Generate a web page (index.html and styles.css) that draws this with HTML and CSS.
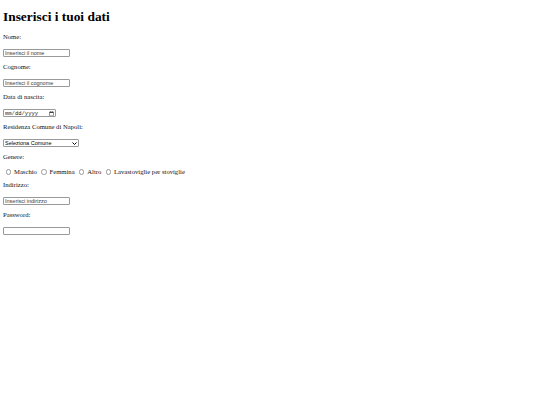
FILE: index.html
```html
<!DOCTYPE html>
<html lang="it">
<head>
    <meta charset="UTF-8">
    <meta name="viewport" content="width=device-width, initial-scale=1.0">
    <link rel="stylesheet" href="styles.css">
    <title>Registrazione</title>
</head>
<body>

<h1>Inserisci i tuoi dati</h1>

<form id="dati">
    <label for="nome">Nome:</label>
    <input type="text" id="nome" name="nome" placeholder="Inserisci il nome">

    <label for="cognome">Cognome:</label>
    <input type="text" id="cognome" name="cognome" placeholder="Inserisci il cognome">

    <label for="nascita">Data di nascita:</label>
    <input type="date" id="nascita" name="nascita">

    <label for="comune">Residenza Comune di Napoli:</label>
    <span class="scelta">
        <select id="comune" name="comune">
            <option value="">Seleziona Comune</option>
            <option value="napoli">Napoli</option>
            <option value="pozzuoli">Pozzuoli</option>
            <option value="torre-del-greco">Torre del Greco</option>
            <option value="castellammare">Castellammare di Stabia</option>
        </select>
        <svg class="freccia" width="5" height="3" viewBox="0 0 10 6"><path d="M1 1l4 4 4-4" fill="none" stroke="#000" stroke-width="2"/></svg>
    </span>

    <span class="titolo">Genere:</span>
    <div class="genere">
        <input type="radio" id="maschio" name="genere" value="maschio"><label for="maschio">Maschio</label>
        <input type="radio" id="femmina" name="genere" value="femmina"><label for="femmina">Femmina</label>
        <input type="radio" id="altro" name="genere" value="altro"><label for="altro">Altro</label>
        <input type="radio" id="lavastoviglie" name="genere" value="lavastoviglie"><label for="lavastoviglie">Lavastoviglie per stoviglie</label>
    </div>

    <label for="indirizzo">Indirizzo:</label>
    <input type="text" id="indirizzo" name="indirizzo" placeholder="Inserisci indirizzo">

    <label for="password">Password:</label>
    <input type="password" id="password" name="password">
</form>

</body>
</html>
```

FILE: styles.css
```css
body {
    margin: 0;
    padding: 3px;
    font-family: "Liberation Serif", "Times New Roman", serif;
    font-size: 6.65px;
    color: #111;
}

h1 {
    margin: 6px 0 9px;
    font-size: 13.4px;
    line-height: 15.4px;
    color: #000;
}

#dati {
    display: flex;
    flex-direction: column;
    align-items: flex-start;
}

#dati > label,
.titolo {
    line-height: 8px;
    margin-bottom: 8px;
}

#dati > input,
.scelta {
    margin-bottom: 6px;
}

.genere {
    margin-bottom: 5px;
}

.titolo {
    margin-bottom: 7px;
}

input[type="text"],
input[type="password"],
input[type="date"],
select {
    box-sizing: border-box;
    height: 8px;
    padding: 0 1px;
    font-family: "Liberation Sans", Arial, sans-serif;
    font-size: 5.5px;
    color: #000;
    background: #fff;
    border: 1px solid #999;
    border-radius: 1px;
}

input[type="text"],
input[type="password"] {
    width: 67px;
}

input::placeholder {
    color: #3a3a3a;
}

input[type="date"] {
    width: 53px;
    font-family: "Liberation Mono", monospace;
    color: #222;
}

input[type="date"]::-webkit-datetime-edit,
input[type="date"]::-webkit-datetime-edit-fields-wrapper,
input[type="date"]::-webkit-datetime-edit-month-field,
input[type="date"]::-webkit-datetime-edit-day-field,
input[type="date"]::-webkit-datetime-edit-year-field,
input[type="date"]::-webkit-datetime-edit-text {
    padding: 0;
    margin: 0;
}

input[type="date"]::-webkit-calendar-picker-indicator {
    width: 5px;
    height: 5px;
    padding: 0;
    margin: 0 0 0 1px;
}

.scelta {
    position: relative;
    display: inline-block;
    height: 8px;
}

select {
    appearance: none;
    display: block;
    width: 76px;
    margin: 0;
}

.freccia {
    position: absolute;
    top: 3px;
    right: 2px;
    pointer-events: none;
}

.genere {
    line-height: 8px;
}

.genere input[type="radio"] {
    appearance: none;
    box-sizing: border-box;
    width: 5.5px;
    height: 5.5px;
    margin: 0 3px 0 2.5px;
    vertical-align: -0.5px;
    border: 1px solid #999;
    border-radius: 50%;
}
```
